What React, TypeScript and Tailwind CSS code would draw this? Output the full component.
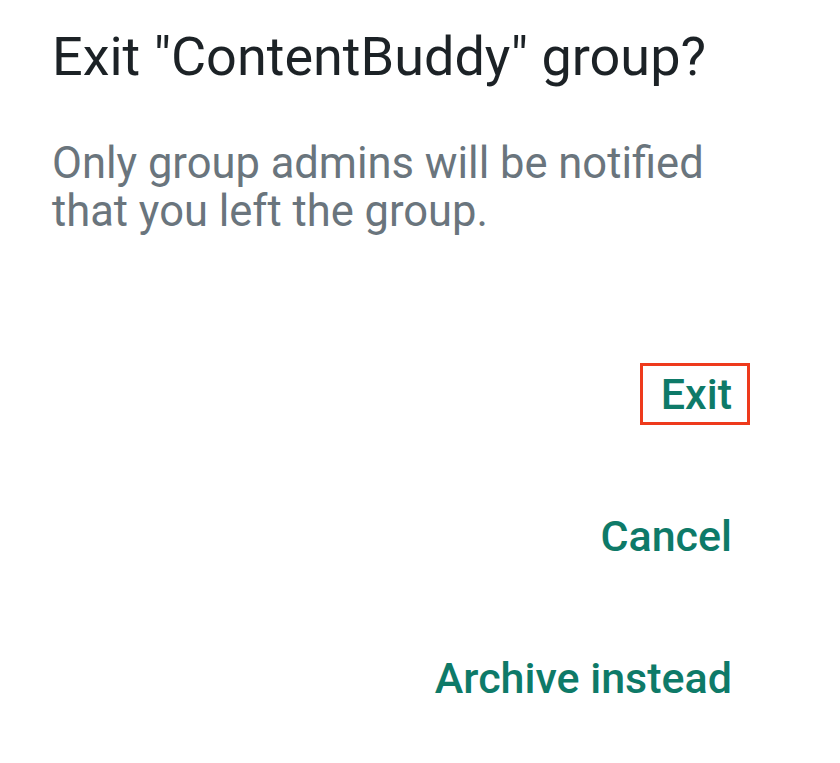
import React from 'react';

function App() {
  const actions = [
    { label: "Exit", highlight: true },
    { label: "Cancel", highlight: false },
    { label: "Archive instead", highlight: false },
  ];

  return (
    <div className="w-[840px] h-[763px] bg-white font-['Roboto',sans-serif] overflow-hidden">
      <div className="pl-[52px] pt-[25px]">
        <h1 className="text-[54px] leading-[64px] text-[#1c2226] font-normal">Exit "ContentBuddy" group?</h1>
        <p className="mt-[51px] text-[43.5px] leading-[48px] text-[#6a757d]">
          Only group admins will be notified
          <br />
          that you left the group.
        </p>
      </div>

      <div className="flex flex-col items-end gap-[80px] pr-[90px] mt-[127px]">
        {actions.map((a) => (
          <button
            key={a.label}
            className={`h-[62px] pl-[18px] pr-[15px] border-[3px] text-[43px] leading-[56px] font-medium text-[#0e7a68] ${
              a.highlight ? "border-[#ee3a1c]" : "border-transparent"
            }`}
          >
            {a.label}
          </button>
        ))}
      </div>
    </div>
  );
}

export default App;
